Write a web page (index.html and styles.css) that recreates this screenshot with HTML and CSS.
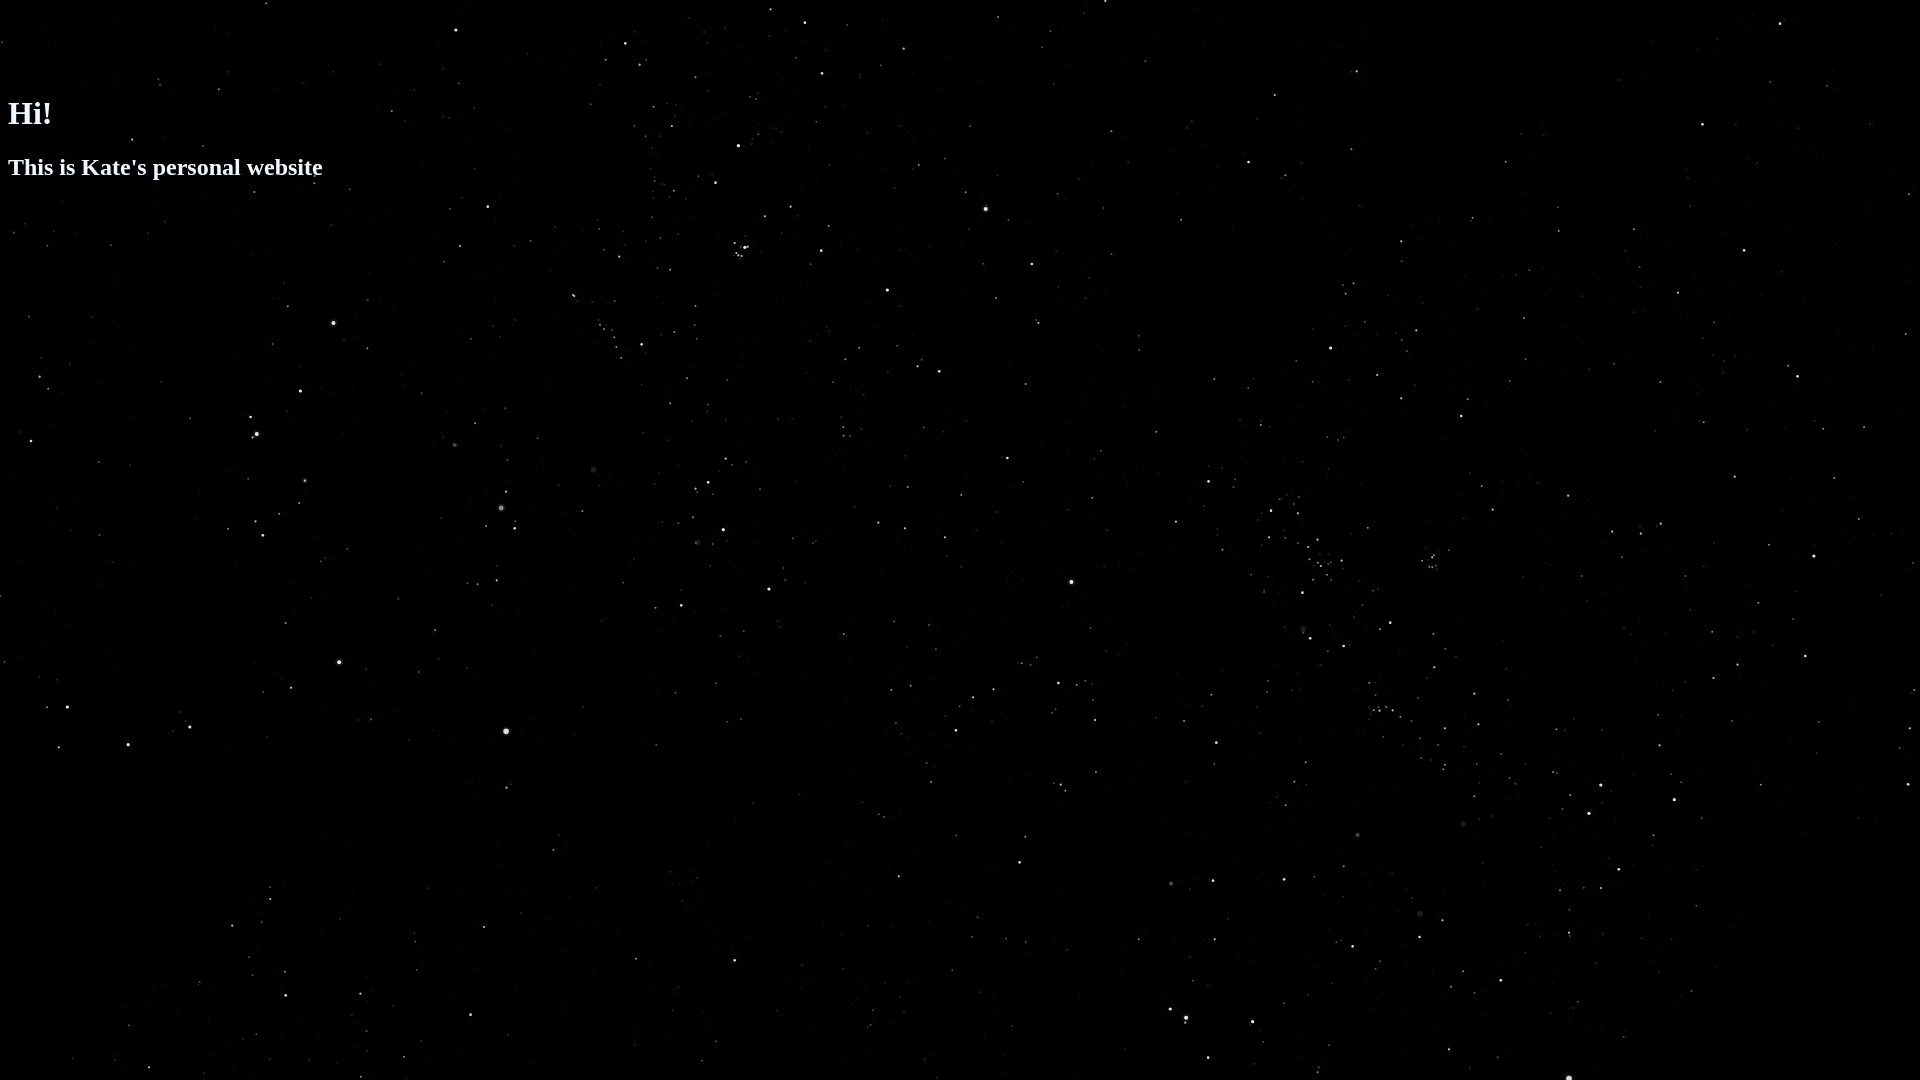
FILE: index.html
```html
<!DOCTYPE html>
<html lang="en">

<head>
    <meta charset="UTF-8">
    <meta name="viewport" content="width=device-width, initial-scale=1.0">
    <title>Kate's personal website</title>
    <link rel="stylesheet" href="styles.css">
</head>

<body>
    <canvas id="sky" aria-hidden="true"></canvas>
    <main class="intro">
        <h1>Hi!</h1>
        <h2>This is Kate's personal website</h2>
    </main>
    <script src="stars.js"></script>
</body>

</html>
```
FILE: styles.css
```css
body {
    margin: 8px;
    background-color: black;
    color: aliceblue;
    font-family: "Liberation Serif", "Times New Roman", serif;
}

/* Night sky behind the page */
#sky {
    position: fixed;
    top: 0;
    left: 0;
    z-index: -1;
    width: 100%;
    height: 100%;
}

.intro {
    padding-top: 65px;
}

h1 {
    margin: 22px 0;
    font-size: 32px;
}

h2 {
    margin: 20px 0;
    font-size: 24px;
}
```
FILE: stars.js
```js
// Star map: nine sectors, left to right and top to bottom.
// Each star is "x,y,magnitude" in sector units (1568 x 1080).
const sectorWidth = 1568;
const sectorHeight = 1080;

const sectors = [
    `652,10,4 1117,90,7 1532,130,6 1484,179,4 5,127,3 388,238,3 392,254,3 536,268,4 558,98,1 558,215,2
    527,77,1 816,215,2 930,193,2 1124,250,3 1014,269,2 962,265,1 1086,207,2 1122,39,1 1152,17,1 1292,163,2
    1250,181,1 1332,180,1 1378,213,1 1406,157,1 1470,255,2 1461,270,1 1447,313,3 1554,377,3 1555,95,2 1503,105,1
    1472,131,1 1075,129,1 960,333,4 882,322,1 991,363,2 1008,382,1 925,331,1 1086,350,2 1100,354,2 1119,337,1
    1161,324,2 1222,383,1 1249,386,1 1293,380,1 324,419,5 497,438,3 400,410,1 744,249,2 773,248,1 676,268,1
    771,528,4 770,550,4 857,568,3 623,576,4 740,560,1 1195,620,6 1131,593,2 1224,596,1 1102,626,3 1213,660,1
    1148,421,1 1255,458,1 1256,529,1 1163,506,2 1037,491,1 34,698,3 61,671,2 132,694,2 24,694,1 116,737,3
    272,736,3 363,700,2 404,666,2 129,632,1 187,698,1 391,619,1 570,625,1 810,676,2 817,675,1 908,664,1 854,636,1
    954,640,1 1127,738,5 1088,785,3 1006,769,1 1073,707,1 1260,738,2 1300,722,3 1360,681,2 1387,738,1 1353,767,1
    1464,660,2 1468,687,3 1427,692,1 1527,694,2 1516,713,1 1480,749,3 1530,734,2 1517,770,5 1538,776,1 1222,802,1
    1176,828,1 1350,813,1 1440,841,1 1404,885,5 1407,888,5 1415,902,2 1418,880,1 1451,906,2 1471,890,1 1506,903,3
    1213,893,1 705,919,4 695,848,2 668,895,1 681,893,1 901,900,3 932,890,1 962,926,1 873,946,1 905,819,1
    817,969,8 71,950,3 227,951,2 293,980,1 100,1074,2 668,1032,3 583,1073,1 843,1020,2 873,1011,1
    900,1045,4 1154,1016,3 1208,979,2 1225,1010,2 1261,959,2 1256,975,1 1124,991,1 1209,1076,1 1354,938,1
    1470,974,4 1480,987,4 1484,976,2 1459,977,1 1499,990,3 1505,1012,4 1510,1041,4 1522,1073,4 1467,960,2
    1456,1030,1 1412,991,1 1536,1053,1 1567,194,5 290,64,1 103,95,1 136,128,1 426,281,1 280,240,1 215,248,1
    577,738,1 618,766,1 655,745,1 588,768,1 289,840,1 323,1033,1 230,1028,1 155,602,1 373,575,1 503,587,1`,

    `320,28,5 404,68,6 508,75,3 595,62,1 606,56,1 120,53,2 117,70,1 208,83,2 157,96,2 165,128,2 317,108,2
    356,94,1 406,124,1 13,124,1 250,140,1 211,153,1 455,149,2 460,135,1 382,173,3 270,184,1 446,220,6 459,220,1
    590,196,3 646,146,5 599,91,1 539,225,2 538,233,2 15,179,3 136,232,4 161,217,1 172,221,1 168,272,2
    352,238,1 347,245,1 373,275,1 270,290,3 284,297,3 288,280,2 298,290,1 33,320,4 66,310,2 88,314,2 101,319,1
    454,321,2 500,318,1 86,349,2 137,342,1 206,340,1 78,378,5 96,366,1 120,371,1 157,371,1 189,357,1 216,362,1
    432,365,3 365,355,1 333,385,2 347,396,2 290,402,3 290,371,1 278,381,1 276,417,2 274,432,2 321,385,1 241,437,7
    254,437,1 323,430,1 14,409,3 25,391,1 49,409,2 29,445,2 25,460,1 42,475,1 26,506,2 35,530,2 36,543,3
    53,552,2 60,554,2 32,574,2 33,595,2 83,572,4 72,592,2 112,597,2 124,567,1 157,580,1 143,529,3 177,523,2
    185,548,6 636,379,2 656,395,1 638,355,1 668,418,1 564,359,1 557,399,2 715,401,1 809,379,3 747,476,3 683,495,4
    668,508,2 602,508,1 535,478,1 464,496,2 396,505,1 435,544,1 395,558,1 413,441,1 624,564,2 770,513,1 876,526,2
    798,577,4 840,595,1 847,627,8 848,614,2 903,660,3 951,667,1 829,650,1 806,688,2 1023,582,3 1042,597,1 1075,537,2
    1097,539,1 1135,624,3 1155,394,4 1180,411,1 1196,487,2 1107,492,1 1491,486,6 1479,458,1 1413,500,1 1326,659,4
    1406,564,1 1398,555,1 1316,580,1 1452,688,1 1352,363,2 1340,384,2 1512,357,2 1555,285,5 1380,435,1 1298,452,1
    1238,184,3 1184,175,1 1014,251,2 1050,196,1 985,142,3 1006,93,3 1035,88,1 1087,39,2 1140,3,5 1095,12,1
    877,51,4 788,71,1 902,88,1 1263,115,1 1368,27,1 1417,64,1 1382,135,1 752,172,1 780,241,1 836,244,1 738,267,1
    656,265,1 668,219,1 369,620,5 306,649,5 386,647,2 283,655,1 462,678,4 347,699,2 377,715,1 444,752,6 465,752,1
    418,793,3 510,710,1 492,733,1 531,746,1 636,750,2 648,747,1 679,781,1 642,682,1 708,741,1 787,736,1 569,780,1
    29,652,3 22,656,1 83,653,1 132,652,1 50,714,3 93,702,2 80,709,1 146,707,1 14,723,2 193,714,1 232,729,5
    257,742,7 264,740,5 247,740,3 236,759,5 241,766,5 249,768,5 245,777,2 258,708,2 298,757,2 276,738,1 230,765,2
    43,804,3 74,809,4 24,787,1 181,854,1 183,884,1 41,890,1 58,908,1 136,918,4 134,975,3 84,996,4 52,1004,2
    139,1016,3 4,1033,6 14,1060,2 241,1022,1 275,1030,1 252,1071,1 334,898,1 393,849,1 393,966,1 457,980,2
    464,993,2 434,1004,1 416,1024,2 399,1009,1 606,870,7 601,845,1 564,909,1 638,917,2 632,903,1 627,957,1 584,980,1
    537,1043,4 630,1037,3 668,1004,1 503,1078,4 690,1079,3 841,791,3 845,804,1 872,894,4 799,874,1 960,792,6
    1020,754,2 1155,762,3 1100,835,2 1079,811,1 1112,870,1 1025,861,2 1025,900,1 1140,879,1 1091,895,2 1059,918,1
    971,960,3 976,969,5 1222,1007,3 1223,1050,3 1136,1052,1 1372,1030,1 1251,720,1 1110,775,1`,

    `1225,71,6 1235,61,2 1215,82,1 1258,71,1 1158,45,1 1130,56,1 1147,95,1 1072,117,2 1077,155,1 1022,146,1
    911,122,1 52,128,1 123,127,1 117,170,1 152,142,1 208,84,1 215,107,1 188,214,5 175,215,2 202,216,1 214,241,1
    1201,246,3 1185,263,1 1340,257,3 1354,213,1 1363,267,1 1209,302,1 831,240,2 887,228,1 1035,373,6 1117,374,2
    1270,385,2 1229,378,1 1445,371,2 1452,365,1 645,370,1 646,404,2 591,402,2 208,425,1 175,448,4 187,474,1
    52,377,1 53,489,2 52,326,1 553,485,4 626,474,1 13,526,4 3,534,2 38,555,1 57,598,1 592,579,1 603,633,1
    681,622,3 683,693,4 998,507,1 1000,533,2 1017,547,1 1005,618,2 1059,539,1 1169,489,2 1145,477,1 1260,447,1
    1301,450,1 1332,464,1 1495,511,1 1541,583,4 1551,563,1 1438,624,1 1147,615,1 1248,674,1 195,617,2 202,619,1
    472,653,4 468,663,2 511,660,1 356,671,1 390,661,1 324,678,1 113,661,1 133,703,1 297,724,5 347,716,1 418,738,1
    298,784,3 158,765,1 867,688,4 896,681,1 883,711,1 948,725,1 846,752,2 851,777,1 881,801,3 902,847,1 883,860,2
    1137,751,6 1130,758,1 1088,701,1 1362,733,1 1229,815,2 1016,830,1 975,878,5 1033,882,1 970,912,1 1113,857,1
    1179,884,1 1284,898,1 809,898,1 765,819,1 611,811,3 643,803,1 579,825,2 545,829,1 674,821,1 648,885,1 740,889,2
    454,827,1 444,845,1 503,870,1 180,850,4 154,856,3 161,881,4 210,856,1 265,886,2 271,872,1 284,904,1 349,909,2
    484,927,2 598,954,4 700,982,1 726,1011,1 490,980,1 419,991,1 404,947,1 208,965,3 160,979,2 170,974,1 131,948,1
    185,1004,1 80,988,2 50,1007,1 284,1000,2 309,979,1 334,991,5 298,1019,3 237,1005,1 124,1044,7 138,1046,1
    203,1051,1 311,1053,3 315,1062,1 867,937,2 890,932,1 981,945,1 1063,967,3 1101,951,1 1219,984,1 1036,1013,2
    1060,1066,2 1115,1067,2 1148,1067,1 1370,996,1 1533,1002,4 1452,1048,1 1392,1048,1 602,1077,3 859,1057,1
    1544,803,1 1538,843,1`,

    `97,50,5 118,86,4 152,99,1 172,13,2 394,66,2 249,68,1 736,93,7 748,95,1 736,20,1 662,54,1 703,153,2 722,191,1
    614,171,6 601,165,1 629,222,8 619,232,5 645,219,1 577,255,1 584,317,1 466,175,3 321,172,1 366,240,1 76,243,6
    48,216,2 123,196,1 242,306,3 318,316,2 24,354,1 608,356,3 559,333,1 747,362,5 747,362,11 748,399,1 488,395,1
    733,429,4 684,461,4 672,460,1 695,461,1 626,484,5 559,506,4 644,526,6 481,478,1 140,443,2 224,392,1 190,421,1
    173,511,2 244,525,3 122,495,1 118,415,1 275,606,2 260,600,1 54,604,1 320,601,1 249,661,1 241,676,1 578,609,1
    774,532,1 851,566,3 796,595,2 786,604,3 814,596,1 713,668,1 797,698,1 763,714,2 722,752,1 623,721,1 700,789,4
    1,707,3 111,725,1 135,759,1 170,795,1 105,862,1 270,870,1 54,892,1 11,905,3 96,950,2 139,959,2 282,919,1
    831,907,8 848,907,1 897,926,2 906,971,1 624,909,1 676,943,1 713,983,5 645,997,3 688,958,1 115,1042,4 165,1041,7
    441,1056,2 797,1039,1 909,1077,3 931,1057,1 969,1054,1 889,1062,1 1012,14,1 982,46,1 989,74,1 1124,54,1
    866,80,1 787,83,1 809,99,1 1033,100,3 873,177,1 840,223,1 1094,156,1 1186,150,1 1164,190,4 1238,145,3 1081,218,1
    1086,232,2 1060,246,1 1114,255,9 1227,258,2 1243,301,3 1317,234,3 1331,305,1 1332,320,1 1247,363,1 1194,397,1
    1240,395,5 1228,444,10 1154,427,1 1142,450,1 1191,498,4 1261,505,6 1263,484,3 1306,445,1 1080,475,2 1059,484,1
    1376,460,1 1394,505,1 1427,453,4 1454,329,11 1369,376,2 1469,377,2 1491,348,1 1520,366,1 1520,287,1 1124,537,1
    1035,554,1 1217,619,2 1217,661,5 1170,673,4 1145,670,3 1047,634,1 1286,667,1 1205,734,2 1227,749,1 1272,756,1
    976,716,3 1066,810,4 1061,818,1 1187,801,1 1137,818,1 1075,896,2 1121,888,1 1026,936,3 1144,925,2 1169,941,1
    1310,880,1 1411,683,1 1415,735,1 1481,638,1 1527,668,3 1553,596,2 1562,534,1 1546,616,1 1474,782,2 1429,1040,2
    1303,1076,1 1512,48,1 1541,7,1 1294,69,1 1341,72,1`,

    `680,19,5 733,34,6 749,34,1 607,35,2 473,67,3 115,55,4 214,60,3 132,22,1 242,20,1 4,74,2 65,83,1 65,102,1
    74,130,4 167,134,3 165,154,2 128,183,2 211,179,2 255,166,1 263,177,1 338,178,2 373,176,2 410,38,1 403,43,1 417,55,1
    8,218,2 59,235,1 68,241,2 240,248,1 548,104,2 530,94,1 517,82,1 537,160,1 493,172,2 498,201,4 499,227,4 515,229,3
    542,207,2 695,202,3 744,215,2 682,231,1 746,167,1 800,182,2 945,72,4 905,18,1 1117,62,1 1089,120,1 1187,97,1
    1186,138,1 1265,96,1 1048,188,1 982,246,1 1048,274,1 1265,215,4 1407,57,4 1503,56,2 1490,85,3 1552,132,1
    1470,181,2 1477,195,1 1521,183,2 1521,195,4 1543,200,2 1483,258,1 1489,309,1 1129,272,3 1113,297,2 1185,350,1
    1194,368,1 1130,351,1 1251,309,1 1234,320,1 1271,338,1 900,294,6 888,292,2 939,366,3 910,380,1 787,405,4
    768,387,1 802,349,1 656,381,4 613,379,2 650,287,2 563,254,1 471,272,1 503,274,1 481,283,1 466,297,1 500,326,1
    210,296,5 225,314,3 260,306,3 195,332,2 249,324,1 275,323,1 285,343,1 167,367,6 136,386,5 140,397,3 178,403,3
    138,405,1 47,340,2 36,372,2 96,314,1 294,387,3 383,365,2 526,441,2 130,472,4 54,485,2 94,489,3 32,529,1
    204,509,7 190,509,1 214,500,1 229,523,1 137,549,3 141,547,11 178,552,3 213,543,2 293,485,1 375,535,3 410,505,1
    463,511,1 424,548,3 431,543,2 279,550,1 218,601,1 237,625,1 172,618,2 117,620,1 351,624,3 356,661,3 405,668,2
    316,687,7 100,691,2 38,743,4 101,736,6 134,755,1 80,775,1 205,748,1 584,488,5 649,505,5 730,463,1 727,517,1
    747,532,5 824,511,2 875,456,2 752,588,2 768,573,1 787,620,2 666,596,1 648,568,1 630,542,1 590,631,1 885,550,1
    911,637,1 994,486,1 1048,450,2 1054,414,1 1108,413,4 1109,478,1 1144,511,2 937,661,1 900,663,1 921,684,1
    1057,666,8 1138,619,2 1121,622,1 1027,630,1 1174,613,1 1208,628,1 1048,730,1 1036,740,1 1090,706,1 1393,318,2
    1426,325,2 1393,364,6 1458,358,3 1454,381,3 1358,367,1 1349,413,1 1324,431,1 1382,438,2 1313,485,5 1414,508,2
    1415,526,2 1427,569,4 1449,569,1 1456,590,1 1301,566,1 1229,580,1 1523,460,2 1514,480,2 1546,452,6 1540,462,1
    1541,532,5 1523,555,2 1497,644,3 1539,650,2 1552,656,1 1529,696,3 1529,689,2 1565,700,1 1551,733,1 1566,418,3
    1097,779,1 1104,804,3 1149,781,1 1192,852,1 1142,874,2 1174,886,1 1186,880,1 972,892,3 935,910,4 926,909,2
    957,914,3 949,906,1 974,930,1 1025,969,6 1070,975,4 1091,962,3 1108,972,2 1132,974,1 1110,1020,3 1043,1000,1
    1018,1048,3 1010,1058,3 1115,1079,4 866,988,5 898,1003,1 816,1012,5 783,1039,3 814,1050,1 883,1060,1 748,1068,2
    499,822,4 506,826,2 488,832,1 518,774,1 623,784,3 709,773,1 708,795,3 729,811,1 797,817,1 822,757,1 888,791,1
    655,861,2 725,868,3 777,857,1 513,898,1 337,783,2 342,802,2 254,814,3 197,829,3 49,812,1 243,889,2 263,897,1
    289,938,1 408,958,1 186,970,3 87,998,3 33,937,1 43,1001,1 247,1077,3 507,1021,1 616,990,4 663,977,4 718,957,1
    641,930,1 615,951,1 672,1025,1 1400,1004,4 1378,1039,2 1337,1035,1 1317,1011,1 1265,1074,2 1428,934,1 1558,917,1
    1538,962,3 1536,996,3 1512,1040,2 1316,943,1 1454,918,1`,

    `238,45,5 248,38,1 80,65,3 40,2,3 10,36,1 102,22,1 95,67,1 112,77,1 168,60,2 170,70,1 170,121,1 211,145,1
    310,62,1 330,76,2 297,115,5 304,167,1 460,118,4 444,168,6 452,85,1 418,90,1 563,63,3 559,85,1 508,138,1 416,40,1
    466,13,1 758,27,2 757,34,1 694,34,1 638,7,1 602,0,1 818,11,3 932,66,4 1018,65,1 1086,38,2 1088,3,2 1038,94,1
    1021,100,1 1245,17,4 1268,49,6 1268,77,1 1348,62,1 1203,121,1 1029,183,2 1038,187,4 963,168,1 919,213,2 1144,210,2
    1238,203,1 1309,174,1 1311,183,2 1331,206,4 1431,201,4 1516,150,1 47,142,1 24,183,1 116,231,3 142,240,3 156,233,3
    150,221,1 163,214,1 398,238,1 55,307,2 10,303,1 119,327,2 116,355,1 138,337,1 199,373,1 70,385,1 465,339,2
    494,378,4 547,364,1 547,396,1 585,375,1 631,369,2 611,343,1 589,266,1 663,294,1 706,407,5 755,419,1 768,457,1
    521,449,5 537,431,1 524,498,1 450,475,2 419,487,1 361,482,1 437,404,1 17,404,2 29,396,1 46,411,3 34,432,3 3,418,2
    44,460,5 57,490,1 11,511,2 13,533,3 44,549,3 48,564,1 69,561,5 92,539,5 72,598,4 100,618,5 93,608,4 98,583,2
    119,583,2 124,607,3 118,612,3 110,608,2 82,618,2 86,625,1 151,602,5 154,626,2 115,644,4 125,659,3 118,667,1
    81,659,4 86,671,1 196,490,1 215,503,4 175,521,2 195,662,2 168,683,1 228,692,3 240,687,2 222,709,1 202,736,3
    187,755,1 181,772,2 196,787,1 55,698,6 19,691,1 12,727,1 12,802,2 57,818,3 57,808,11 57,802,1 74,835,6 35,835,1
    65,800,1 122,795,2 129,806,1 156,858,6 171,855,2 155,848,1 134,834,1 146,822,1 117,874,3 95,914,1 100,916,2
    270,788,6 245,808,4 213,806,1 348,602,4 357,565,2 364,600,2 377,586,4 373,592,5 414,570,3 366,620,4 373,622,4
    382,617,3 384,628,2 367,629,1 389,574,1 376,822,4 410,768,1 444,778,1 405,866,3 431,891,2 378,922,5 360,955,2
    313,875,1 292,875,1 245,945,1 219,968,4 234,968,2 186,988,1 234,1005,3 262,1000,1 338,1014,3 476,1001,5 471,964,1
    554,927,2 597,953,1 559,1020,3 566,1034,1 546,843,1 588,816,1 244,1052,5 230,1051,4 276,1051,5 241,1042,3
    259,1040,3 262,1042,3 223,1063,2 295,1070,4 218,1043,2 218,1078,2 41,938,1 58,967,1 30,989,2 50,988,1 53,1025,1
    453,1064,1 721,1076,2 926,1064,3 983,1067,1 739,648,3 596,652,2 645,678,1 652,610,1 665,615,1 659,538,1 634,510,1
    695,471,1 814,515,5 838,592,3 795,549,1 884,521,5 882,499,2 933,491,5 923,499,2 942,480,1 887,572,1 956,564,1
    1114,350,5 1055,342,1 1063,548,2 1038,619,2 1198,554,4 1266,577,1 1310,554,1 1308,588,7 1394,551,1 1379,520,1
    1418,477,4 1454,524,1 1498,521,2 1526,510,1 1358,354,4 1359,384,1 1253,356,1 1299,418,1 1233,452,1 1401,411,1
    1370,623,1 1551,608,3 1543,627,1 1473,706,2 993,648,3 998,682,1 753,723,2 788,746,1 830,691,1 795,699,1 692,747,1
    1005,749,2 1152,674,1 1265,694,2 1172,728,4 1149,730,1 1257,777,3 1059,815,4 1121,831,2 1130,815,1 1160,816,2
    1208,856,2 880,776,1 843,805,2 859,823,2 943,820,1 922,792,1 887,857,1 1026,848,1 1121,914,5 1062,954,5
    1070,946,1 1126,958,1 1153,963,1 1183,970,1 1287,888,6 1454,939,1 993,965,2 962,991,2 940,976,1 873,900,1
    1400,1032,1 1144,1058,1 1554,990,4 1547,998,2`,

    `465,21,9 465,21,6 314,74,7 144,82,5 135,48,1 455,2,2 424,34,2 412,41,1 655,51,2 568,82,1 876,0,2 908,1,2 1002,59,2
    1240,34,12 1277,43,1 1061,30,1 1074,46,1 1106,70,1 1207,59,1 1314,55,1 1408,46,1 1420,36,1 1555,72,1 1241,203,5
    1252,193,2 1229,214,1 1274,203,1 1175,178,1 1146,188,1 1163,228,1 847,372,1 797,338,1 1218,378,1 1369,346,2
    1390,373,1 1356,390,4 1379,400,1 1227,435,1 662,502,3 695,494,1 662,537,5 656,549,1 608,535,1 633,580,1 641,607,3
    569,617,5 629,686,1 610,712,3 619,766,3 698,755,4 671,763,1 700,826,6 688,809,1 787,633,1 833,596,2 848,558,1
    866,512,1 1050,505,2 1133,506,1 1247,510,1 1287,517,1 1276,580,2 1162,608,1 1186,621,5 1193,615,1 1348,597,1
    1424,602,1 1461,503,2 1468,498,1 1395,532,1 1461,616,1 1512,643,1 1304,641,1 1558,716,4 1015,639,2 1017,665,3
    1033,679,1 1075,672,1 1021,750,3 1036,738,1 1133,693,1 1163,748,1 1382,692,1 1264,806,1 489,786,3 486,794,2
    527,793,1 375,802,1 404,795,1 363,849,1 313,858,1 300,862,1 433,871,1 316,916,3 511,896,1 883,821,5 912,814,1
    899,844,1 898,771,1 963,857,2 862,885,2 867,910,1 741,890,1 898,933,3 900,992,2 781,952,1 870,982,1 1153,884,6
    1153,898,1 1104,832,1 1245,946,2 1032,963,2 1130,990,1 990,1010,4 1051,1014,1 884,1070,4 906,1064,1 826,1029,1
    757,1021,2 661,1017,2 660,936,1 628,943,3 596,957,2 562,961,1 470,958,1 689,953,1 518,1005,1 500,1060,2 571,1043,1
    616,1074,1 365,1042,5 355,1049,1 282,1019,2 288,1006,1 301,1037,1 178,1015,2 1300,1029,1 1380,864,1 1561,936,1
    1555,975,2 998,1077,1 1454,754,1`,

    `774,31,6 778,40,1 627,9,3 640,41,2 655,51,1 671,84,1 656,99,1 606,48,1 606,25,1 715,43,1 750,76,1 820,73,1
    862,5,2 214,5,3 462,6,1 40,74,3 13,67,1 702,129,3 722,142,1 713,186,4 521,151,1 585,283,3 598,291,3 638,285,1
    623,291,1 545,246,2 391,223,2 420,226,1 277,250,2 233,299,1 165,368,1 775,346,3 944,350,4 930,427,6 859,455,1
    867,443,1 904,187,1 948,164,1 1014,190,3 1031,194,5 1042,212,4 1020,245,1 1117,156,4 1152,208,1 1207,187,1
    1229,132,1 1201,23,1 1115,1,4 1333,3,4 1412,68,6 1422,58,1 1407,133,3 1337,187,2 1495,97,1 1518,40,2 1505,17,1
    1459,6,1 1561,230,2 1544,262,1 1541,247,1 1543,328,1 1388,341,1 1347,339,1 1287,305,1 1456,416,1 1301,491,9
    1318,484,1 1404,482,6 1394,480,1 1367,478,1 1348,508,2 1510,478,1 1529,494,1 634,469,5 611,441,1 685,402,1
    510,373,1 505,369,1 497,463,1 461,429,1 416,499,1 556,520,1 756,548,1 793,568,1 996,508,1 1020,523,1 827,592,3
    814,650,3 897,656,3 890,662,1 945,665,3 951,699,1 1016,662,1 1046,689,2 765,751,3 708,606,1 608,596,1 618,618,1
    558,619,2 449,615,1 492,646,1 460,673,1 353,604,1 267,652,1 75,455,2 83,462,1 67,490,1 80,494,1 97,491,1 104,481,1
    127,451,1 139,474,2 127,482,1 87,518,1 143,511,1 144,529,1 104,542,2 112,554,1 118,565,1 153,582,1 171,616,1
    184,638,1 195,673,1 225,684,1 232,721,6 238,711,1 245,743,1 22,725,1 94,802,2 87,820,1 24,801,1 80,871,2 153,877,1
    164,912,1 67,948,1 187,964,3 152,1022,3 336,872,2 347,884,1 420,935,1 397,736,2 425,770,1 404,784,1 395,805,1
    359,774,1 498,746,2 536,780,1 552,797,1 551,815,1 532,836,1 600,788,2 657,790,1 681,791,1 637,832,2 647,877,2
    571,871,3 576,866,1 565,914,3 558,920,2 570,901,1 520,853,1 612,909,1 550,991,1 494,1026,1 697,1018,2 699,1024,1
    718,1004,1 727,1073,2 832,817,2 865,825,1 911,918,2 961,936,1 874,876,1 845,949,1 892,1005,1 891,1061,1
    1188,988,2 1179,759,1 1222,658,4 1230,647,1 1237,638,1 1191,687,1 1310,654,1 1382,661,1 1408,658,5 1348,712,2
    1440,596,2 1497,663,1 1468,706,1 1497,724,1 1355,782,3 1391,797,2 1280,836,1 1076,831,1 1299,867,7 1287,873,1
    1338,893,8 1336,908,5 1348,880,1 1501,905,7 1495,914,2 1498,896,2 1520,932,1 1527,966,3 1392,1013,6 1342,1033,1
    1505,1031,2 1496,1037,1 1076,1057,1`,

    `486,13,5 404,25,5 322,3,3 452,25,1 253,51,3 194,31,1 206,33,1 240,8,1 124,37,1 50,51,1 343,55,3 301,76,2 325,78,1
    350,90,1 387,75,3 451,80,2 346,114,3 370,120,2 404,134,4 400,148,4 482,132,3 488,170,1 488,189,2 514,157,1 448,167,1
    542,102,3 555,9,1 677,28,4 698,30,2 789,30,2 686,68,1 682,115,1 711,134,1 601,133,2 669,156,4 678,159,3 682,168,1
    562,174,3 577,191,3 476,229,4 527,240,1 557,238,1 585,226,1 711,225,4 786,195,7 795,180,1 760,186,1 812,212,2
    790,248,2 692,267,3 757,280,7 766,270,1 751,292,1 660,295,2 714,325,1 821,301,1 780,348,1 930,76,5 934,64,1 841,104,1
    940,24,1 975,37,1 975,47,1 958,163,3 983,187,3 1024,154,1 865,166,1 966,239,7 1033,295,3 1048,304,1 1107,3,3
    1320,6,3 1251,64,1 1315,99,2 1178,194,4 1173,210,1 1246,205,1 1228,241,1 1166,144,1 1417,209,1 1417,293,2
    1460,303,1 1490,314,1 1288,340,1 1543,25,5 1518,84,3 1538,113,1 1539,193,6 1539,185,1 63,127,4 68,143,1 35,185,4
    64,194,2 41,204,1 14,256,4 30,249,1 64,246,1 38,289,1 190,245,1 226,209,1 283,205,1 239,159,1 190,345,9 449,312,11
    488,298,2 519,288,2 487,337,1 53,368,1 152,393,1 156,439,4 84,470,3 10,478,6 155,530,2 108,525,1 240,440,1
    205,461,1 275,461,2 217,497,1 312,506,1 323,534,2 401,518,1 343,581,11 289,573,1 389,584,1 398,601,5 342,651,6
    120,626,1 138,667,3 150,661,2 178,679,6 213,637,1 216,559,1 74,701,1 83,740,1 245,724,3 234,746,3 214,778,1
    128,790,2 69,826,2 10,850,3 311,735,1 306,676,1 374,759,1 426,720,1 449,754,4 447,762,1 419,800,4 400,817,1
    477,819,3 503,812,1 514,775,1 541,781,6 540,737,1 577,720,1 601,698,2 618,775,1 668,789,1 671,752,1 254,818,1
    227,868,1 305,871,1 501,884,1 472,936,1 384,924,1 414,988,5 414,978,1 405,986,1 414,998,1 295,989,1 120,976,3
    109,1026,1 95,1042,3 92,1057,4 104,1047,1 46,1012,1 53,943,1 466,1045,2 533,1012,3 562,1004,1 708,1076,12
    776,1033,1 842,951,3 846,933,1 787,929,1 760,929,1 708,901,1 663,880,2 670,870,1 718,864,2 708,867,1 730,845,3
    773,730,2 912,724,1 900,768,1 928,756,2 1068,741,1 1008,813,3 983,829,1 966,853,1 886,654,2 959,657,2 814,625,1
    792,643,2 774,648,1 708,638,5 710,648,3 732,619,1 676,643,1 637,650,2 640,642,1 607,614,2 627,615,1 709,569,3
    686,511,4 677,504,1 695,491,1 744,503,3 786,504,5 822,492,1 834,494,1 805,415,2 809,436,1 830,448,6 866,436,1
    668,348,1 640,382,2 668,434,1 674,456,1 496,429,2 499,494,1 915,346,4 913,376,2 1020,449,2 1038,438,1 953,441,1
    1020,557,3 903,584,1 1123,590,1 1103,622,1 928,691,1`
];

// Radius and opacity for each magnitude (9 to 11 are hazy, 12 is the brightest)
const magnitudes = {
    1: [1, 0.06],
    2: [1, 0.16],
    3: [1, 0.32],
    4: [1, 0.55],
    5: [1.1, 0.75],
    6: [1.3, 0.88],
    7: [1.6, 0.92],
    8: [2, 0.92],
    9: [2.1, 0.28],
    10: [2.4, 0.5],
    11: [2.8, 0.11],
    12: [2.8, 0.85]
};

const canvas = document.getElementById('sky');
const ctx = canvas.getContext('2d');

function drawStar(x, y, magnitude, scale) {
    const [radius, opacity] = magnitudes[magnitude];

    // Faint glow around the big stars
    if (magnitude === 8 || magnitude === 10 || magnitude === 12) {
        ctx.fillStyle = 'rgba(255, 255, 255, 0.08)';
        ctx.beginPath();
        ctx.arc(x, y, (radius + 2) * scale, 0, Math.PI * 2);
        ctx.fill();
    }

    ctx.fillStyle = `rgba(255, 255, 255, ${opacity})`;
    ctx.beginPath();
    ctx.arc(x, y, radius * scale, 0, Math.PI * 2);
    ctx.fill();
}

function drawSky() {
    canvas.width = window.innerWidth;
    canvas.height = window.innerHeight;

    // Cover the window and keep the 16:9 shape of the map
    const tileWidth = Math.max(canvas.width, canvas.height * 16 / 9) / 3;
    const tileHeight = tileWidth * 9 / 16;
    const scale = tileWidth / 640;

    sectors.forEach((sector, index) => {
        const left = (index % 3) * tileWidth;
        const top = Math.floor(index / 3) * tileHeight;

        sector.trim().split(/\s+/).forEach(star => {
            const [x, y, magnitude] = star.split(',').map(Number);
            drawStar(left + x / sectorWidth * tileWidth, top + y / sectorHeight * tileHeight, magnitude, scale);
        });
    });
}

drawSky();
window.addEventListener('resize', drawSky);
```
